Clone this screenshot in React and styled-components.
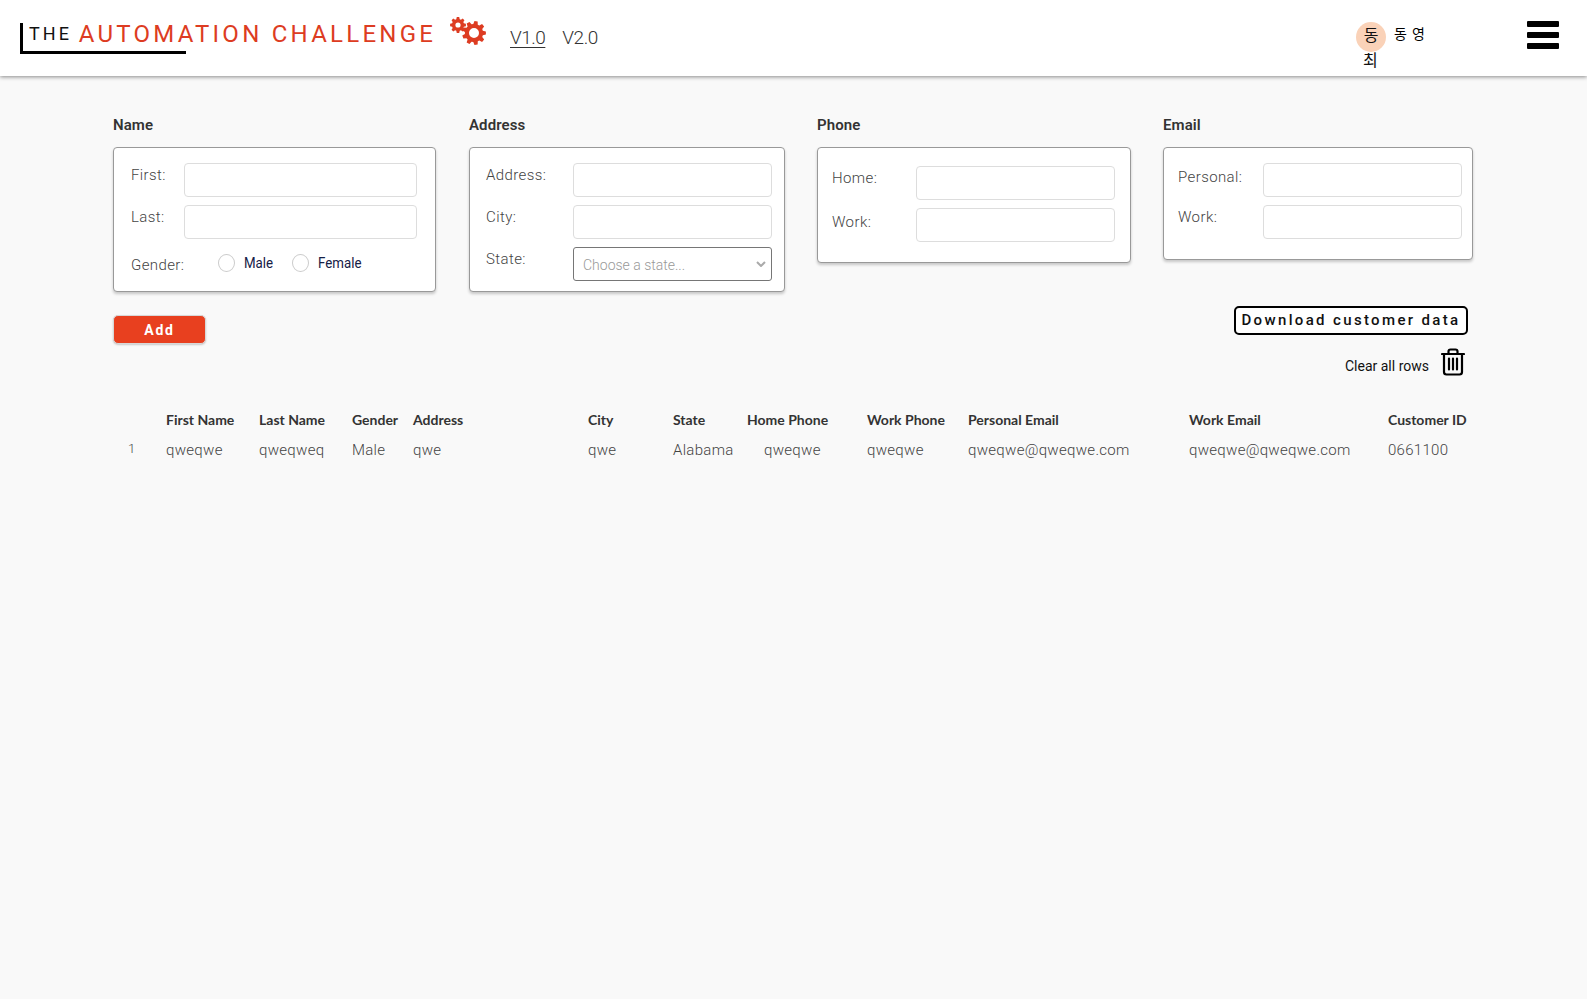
import React from "react";
import styled, { createGlobalStyle } from "styled-components";

const Global = createGlobalStyle`
  html, body { margin: 0; padding: 0; height: 100%; }
  body { background: #f9f9f9; font-family: Roboto, "Noto Sans", sans-serif; color: #333; }
  * { box-sizing: border-box; }
`;

const Page = styled.div`min-height: 999px; background: #f9f9f9;`;

const Header = styled.header`
  height: 76px; background: #fff; box-shadow: 0 1px 4px rgba(0,0,0,.45);
  display: flex; align-items: flex-start; position: relative;
`;
const Logo = styled.div`
  margin: 23px 0 0 20px; height: 31px; width: 166px; border-left: 3px solid #000; border-bottom: 3px solid #000;
  display: flex; white-space: nowrap; padding-left: 6px;
`;
const LogoText = styled.div`
  font: 400 18px/22px Roboto, sans-serif; letter-spacing: 3.1px; color: #111; height: 22px; margin-top: -2px;
`;
const LogoRed = styled.span`
  font-size: 24px; letter-spacing: 3.25px; color: #dd3c22; margin-left: -1px; font-weight: 400;
  position: relative; top: 2px;
`;
const Gears = styled.svg`margin: 17px 0 0 263px; flex: none;`;
const VersionLink = styled.a`
  font: 300 19px/24px Roboto, sans-serif; letter-spacing: -.5px; color: #333; margin: 26px 0 0 ${p => p.$ml}px;
  text-decoration: ${p => p.$active ? "underline" : "none"}; text-underline-offset: 3px;
`;
const Avatar = styled.div`
  position: absolute; left: 1356px; top: 22px; width: 30px; height: 30px; border-radius: 50%; background: #fad2b8;
  font: 400 16px/24px "Noto Sans CJK KR", sans-serif; color: #111; text-align: center;
`;
const AvatarLast = styled.div`
  position: absolute; left: 1363px; top: 47px; font: 400 16px/24px "Noto Sans CJK KR", sans-serif; color: #111;
`;
const UserName = styled.div`
  position: absolute; left: 1394px; top: 22px; font: 400 14px/22px "Noto Sans CJK KR", sans-serif; color: #000; letter-spacing: 1px;
`;
const Burger = styled.div`position: absolute; left: 1527px; top: 21px; width: 32px; height: 28px; display: flex; flex-direction: column; justify-content: space-between;`;
const BurgerBar = styled.span`display: block; height: 6px; border-radius: 1px; background: #000;`;

const Main = styled.main`padding: 0 114px 0 113px;`;
const Forms = styled.div`display: flex; align-items: flex-start; padding-top: 38px; height: 216px;`;
const Group = styled.section`width: ${p => p.$w}px; margin-right: ${p => p.$mr || 0}px; flex: none;`;
const GroupTitle = styled.div`font: 600 15px/22px Roboto, sans-serif; letter-spacing: .1px; color: #333; margin-bottom: 11px; height: 22px;`;
const Card = styled.div`
  background: #fff; border: 1px solid #999; border-radius: 4px; box-shadow: 0 2px 3px rgba(0,0,0,.2);
  height: ${p => p.$h}px; padding: ${p => p.$pt}px ${p => p.$pr}px 0 ${p => p.$pl}px;
  display: flex; flex-direction: column; gap: 8px;
`;
const Row = styled.div`display: flex; align-items: flex-start; justify-content: space-between;`;
const Label = styled.label`font: 300 15px/20px Roboto, sans-serif; letter-spacing: .4px; color: #444; padding-top: ${p => p.$pt ?? 2}px;`;
const Input = styled.input`
  width: ${p => p.$w}px; height: 34px; border: 1px solid #ddd; border-radius: 4px; background: #fff; padding: 0 8px;
`;
const Select = styled.select`
  width: ${p => p.$w}px; height: 34px; border: 1px solid #767676; border-radius: 3px; padding: 2px 9px 0;
  font: 300 14px Roboto, sans-serif; color: #999; appearance: none;
  background: #fff url("data:image/svg+xml,%3Csvg xmlns='http://www.w3.org/2000/svg' width='10' height='6' viewBox='0 0 10 6'%3E%3Cpath d='M1 1l4 4 4-4' fill='none' stroke='%23aaa' stroke-width='2'/%3E%3C/svg%3E") no-repeat right 5px center;
`;
const GenderRow = styled.div`display: flex; align-items: center; margin-top: 4px; height: 24px;`;
const GenderLabel = styled.span`font: 300 15px/20px Roboto, sans-serif; letter-spacing: .4px; color: #444; width: 87px; padding-top: 3px;`;
const Radio = styled.span`width: 17px; height: 18px; border: 1px solid #ccc; border-radius: 50%; background: #fff; flex: none;`;
const RadioText = styled.span`font: 400 14px/20px Roboto, sans-serif; color: #152046; margin: 0 ${p => p.$mr}px 0 9px; transform: scaleX(.95); transform-origin: left;`;

const ActionRow = styled.div`display: flex; justify-content: space-between; align-items: flex-start; height: 116px; padding-right: 5px;`;
const AddButton = styled.button`
  margin-top: 23px; width: 93px; height: 29px; border: 1px solid #d8d8d8; border-radius: 5px; background: #e8401f;
  color: #fff; font: 700 14px/1 Roboto, sans-serif; letter-spacing: 1.8px; box-shadow: 0 1px 2px rgba(0,0,0,.2);
`;
const RightActions = styled.div`display: flex; flex-direction: column; align-items: flex-end; padding-top: 14px;`;
const Download = styled.button`
  width: 234px; height: 29px; border: 2px solid #000; border-radius: 5px; background: #fff; padding: 0;
  font: 500 15px/1 Roboto, sans-serif; letter-spacing: 2.35px; color: #111; white-space: nowrap;
`;
const ClearRow = styled.div`display: flex; align-items: center; gap: 12px; margin-top: 13px; padding-right: 3px;`;
const ClearText = styled.span`font: 400 14px/18px Roboto, sans-serif; color: #111; padding-top: 8px;`;

const Table = styled.table`border-collapse: collapse; table-layout: fixed; width: 1361px;`;
const Th = styled.th`
  font: 700 14px/20px Lato, sans-serif; color: #333; text-align: left; padding: 0; height: 24px; white-space: nowrap;
`;
const Td = styled.td`
  font: 300 15px/20px Roboto, sans-serif; color: #444; letter-spacing: .3px; padding: 0 0 0 ${p => p.$pl ?? 0}px; height: 36px; white-space: nowrap;
`;
const RowNum = styled(Td)`font-size: 13px; padding-left: 15px; padding-bottom: 2px;`;

const columns = [
  ["", 53], ["First Name", 93], ["Last Name", 93], ["Gender", 61], ["Address", 175], ["City", 85],
  ["State", 74], ["Home Phone", 120], ["Work Phone", 101], ["Personal Email", 221], ["Work Email", 199], ["Customer ID", 86],
];
const cells = ["qweqwe", "qweqweq", "Male", "qwe", "qwe", "Alabama", "qweqwe", "qweqwe", "qweqwe@qweqwe.com", "qweqwe@qweqwe.com", "0661100"];

const Gear = ({ cx, cy, r, hole, teeth }) => {
  const pts = [];
  for (let i = 0; i < teeth; i++) {
    const a = (i / teeth) * Math.PI * 2, w = Math.PI / teeth / 1.8;
    const p = (rad, ang) => `${(cx + rad * Math.cos(ang)).toFixed(2)},${(cy + rad * Math.sin(ang)).toFixed(2)}`;
    pts.push(p(r * .76, a - w * 1.3), p(r, a - w * .7), p(r, a + w * .7), p(r * .76, a + w * 1.3));
  }
  return <path fillRule="evenodd" d={`M${pts.join("L")}Z M${cx + hole},${cy} A${hole},${hole} 0 1 0 ${cx - hole},${cy} A${hole},${hole} 0 1 0 ${cx + hole},${cy}Z`} />;
};

const Trash = () => (
  <svg width="24" height="28" viewBox="0 0 24 28" fill="none" stroke="#000" strokeWidth="2.2" strokeLinecap="round" strokeLinejoin="round">
    <path d="M1 6h22M7.5 6V3.5Q7.5 1.5 9.5 1.5h5q2 0 2 2V6M3 6v18q0 2.5 2.5 2.5h13q2.5 0 2.5-2.5V6M8 10.5v11M12 10.5v11M16 10.5v11" />
  </svg>
);

function FormField({ label, w, pt }) {
  return <Row><Label $pt={pt}>{label}</Label><Input $w={w} /></Row>;
}

export default function App() {
  return (
    <Page>
      <Global />
      <Header>
        <Logo>
          <LogoText>THE <LogoRed>AUTOMATION CHALLENGE</LogoRed></LogoText>
        </Logo>
        <Gears width="38" height="30" viewBox="0 0 38 30" fill="#dd3c22">
          <Gear cx={9} cy={8} r={8} hole={2.6} teeth={8} />
          <Gear cx={25} cy={16} r={12} hole={5} teeth={9} />
        </Gears>
        <VersionLink $active $ml={23}>V1.0</VersionLink>
        <VersionLink $ml={17}>V2.0</VersionLink>
        <Avatar>동</Avatar>
        <AvatarLast>최</AvatarLast>
        <UserName>동 영</UserName>
        <Burger><BurgerBar /><BurgerBar /><BurgerBar /></Burger>
      </Header>
      <Main>
        <Forms>
          <Group $w={323} $mr={33}>
            <GroupTitle>Name</GroupTitle>
            <Card $h={145} $pt={15} $pr={18} $pl={17}>
              <FormField label="First:" w={233} />
              <FormField label="Last:" w={233} />
              <GenderRow>
                <GenderLabel>Gender:</GenderLabel>
                <Radio /><RadioText $mr={17}>Male</RadioText>
                <Radio /><RadioText $mr={0}>Female</RadioText>
              </GenderRow>
            </Card>
          </Group>
          <Group $w={316} $mr={32}>
            <GroupTitle>Address</GroupTitle>
            <Card $h={145} $pt={15} $pr={12} $pl={16}>
              <FormField label="Address:" w={199} />
              <FormField label="City:" w={199} />
              <Row>
                <Label>State:</Label>
                <Select $w={199} defaultValue=""><option value="">Choose a state...</option></Select>
              </Row>
            </Card>
          </Group>
          <Group $w={314} $mr={32}>
            <GroupTitle>Phone</GroupTitle>
            <Card $h={116} $pt={18} $pr={15} $pl={14}>
              <FormField label="Home:" w={199} />
              <FormField label="Work:" w={199} pt={4} />
            </Card>
          </Group>
          <Group $w={310}>
            <GroupTitle>Email</GroupTitle>
            <Card $h={113} $pt={15} $pr={10} $pl={14}>
              <FormField label="Personal:" w={199} pt={4} />
              <FormField label="Work:" w={199} />
            </Card>
          </Group>
        </Forms>
        <ActionRow>
          <AddButton>Add</AddButton>
          <RightActions>
            <Download>Download customer data</Download>
            <ClearRow>
              <ClearText>Clear all rows</ClearText>
              <Trash />
            </ClearRow>
          </RightActions>
        </ActionRow>
        <Table>
          <colgroup>{columns.map(([n, w], i) => <col key={i} style={{ width: w }} />)}</colgroup>
          <thead>
            <tr>{columns.map(([n], i) => <Th key={i}>{n}</Th>)}</tr>
          </thead>
          <tbody>
            <tr>
              <RowNum>1</RowNum>
              {cells.map((c, i) => <Td key={i} $pl={i === 6 ? 17 : 0}>{c}</Td>)}
            </tr>
          </tbody>
        </Table>
      </Main>
    </Page>
  );
}
